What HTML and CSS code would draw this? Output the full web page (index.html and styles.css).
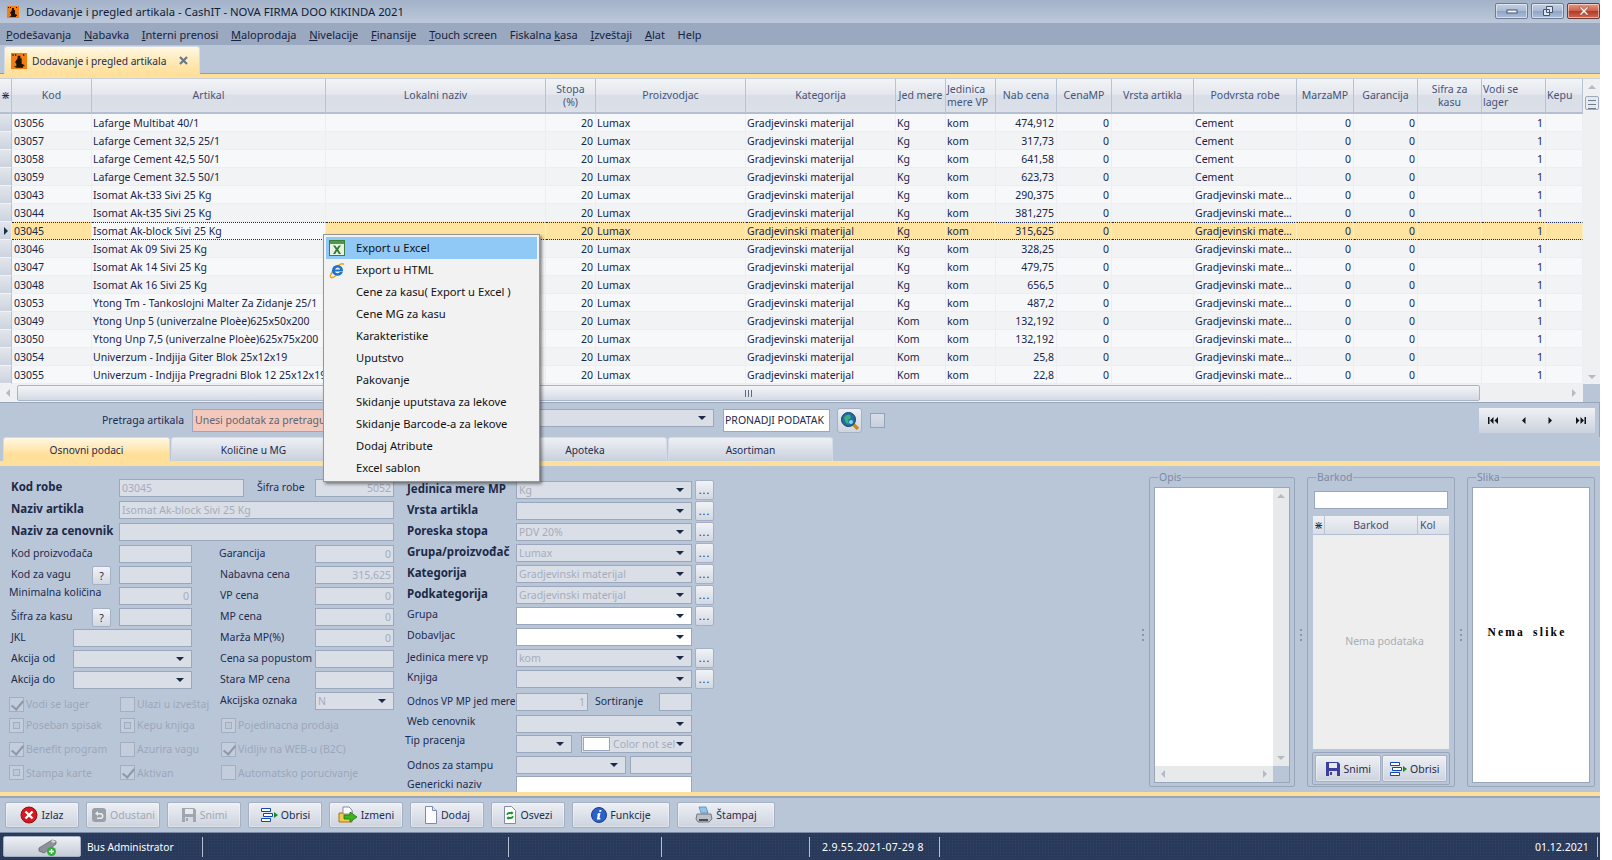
FILE: index.html
```html
<!DOCTYPE html>
<html lang="en">
<head>
    <meta charset="UTF-8">
    <meta name="viewport" content="width=device-width, initial-scale=1.0">
    <title>Dodavanje i pregled artikala - CashIT</title>
    <link rel="stylesheet" href="styles.css">
</head>
<body>
    <svg class="defs" width="0" height="0">
        <symbol id="i-logo" viewBox="0 0 12 12">
            <rect width="12" height="12" fill="#f27d12"/>
            <path d="M1 1h1v1H1zM3 1h1v1H3zM9 1h1v1H9zM5 2h2v2h1v4l2 1v1H9v1H4l-2-1h2V8L3 7l2-3z" fill="#1c1206"/>
        </symbol>
        <symbol id="i-floppy" viewBox="0 0 16 16">
            <path d="M1 1h12l2 2v12H1z" fill="currentColor"/>
            <rect x="4" y="2" width="8" height="5" fill="#e8e8ef"/>
            <rect x="4" y="10" width="8" height="5" fill="#d8d8e0"/>
            <rect x="5" y="11" width="2" height="3" fill="currentColor"/>
        </symbol>
        <symbol id="i-delete" viewBox="0 0 18 16">
            <path d="M1.5 1.5h9v3h-9zM3.5 6.5h9v3h-9zM1.5 11.5h9v3h-9z" fill="#fff" stroke="#1046b0"/>
            <path d="M14 5l4 3-4 3z" fill="#1b8a1b"/>
        </symbol>
    </svg>

    <div class="window">
        <div class="titlebar">
            <svg class="logo"><use href="#i-logo"/></svg>
            <span class="title-text">Dodavanje i pregled artikala - CashIT - NOVA FIRMA DOO KIKINDA 2021</span>
            <div class="win-buttons">
                <div class="win-btn"><svg width="12" height="8"><rect x="1" y="3" width="10" height="3" fill="#f4f6fa" stroke="#44546e"/></svg></div>
                <div class="win-btn"><svg width="12" height="11"><path d="M4.5.5h6v6h-6zM1.5 3.5h6v6h-6z" fill="#dfe6f0" stroke="#44546e"/></svg></div>
                <div class="win-btn close"><svg width="14" height="10"><path d="M2 1h2.5L7 3.5 9.500 1H12L8.500 5 12 9H9.500L7 6.500 4.500 9H2l3.500-4z" fill="#f7f0ee" stroke="#7d3328" stroke-width=".5"/></svg></div>
            </div>
        </div>

        <div class="menubar">
            <span><u>P</u>odešavanja</span>
            <span><u>N</u>abavka</span>
            <span><u>I</u>nterni prenosi</span>
            <span><u>M</u>aloprodaja</span>
            <span><u>N</u>ivelacije</span>
            <span><u>F</u>inansije</span>
            <span><u>T</u>ouch screen</span>
            <span>Fiskalna <u>k</u>asa</span>
            <span><u>I</u>zveštaji</span>
            <span><u>A</u>lat</span>
            <span>Help</span>
        </div>

        <div class="tabstrip">
            <div class="doc-tab">
                <svg class="logo-tab"><use href="#i-logo"/></svg>
                <span>Dodavanje i pregled artikala</span>
                <svg class="tab-close" width="9" height="9"><path d="M1 1l7 7M8 1L1 8" stroke="#6d7684" stroke-width="2.200"/></svg>
            </div>
        </div>
        <div class="gold-line top"></div>

        <div class="grid-wrap">
            <table class="grid">
                <colgroup>
                    <col style="width:12px"><col style="width:80px"><col style="width:234px"><col style="width:220px">
                    <col style="width:50px"><col style="width:150px"><col style="width:150px"><col style="width:50px">
                    <col style="width:50px"><col style="width:61px"><col style="width:55px"><col style="width:82px">
                    <col style="width:103px"><col style="width:57px"><col style="width:64px"><col style="width:64px">
                    <col style="width:64px"><col style="width:37px">
                </colgroup>
                <thead>
                    <tr>
                        <th class="rh">⋇</th><th>Kod</th><th>Artikal</th><th>Lokalni naziv</th><th>Stopa<br>(%)</th>
                        <th>Proizvodjac</th><th>Kategorija</th><th>Jed mere</th><th class="l">Jedinica<br>mere VP</th>
                        <th>Nab cena</th><th>CenaMP</th><th>Vrsta artikla</th><th>Podvrsta robe</th><th>MarzaMP</th>
                        <th>Garancija</th><th>Sifra za<br>kasu</th><th class="l">Vodi se<br>lager</th><th class="l">Kepu</th>
                    </tr>
                </thead>
                <tbody>
                    <tr><td class="rh"></td><td>03056</td><td>Lafarge Multibat 40/1</td><td></td><td class="r">20</td><td>Lumax</td><td>Gradjevinski materijal</td><td>Kg</td><td>kom</td><td class="r">474,912</td><td class="r">0</td><td></td><td>Cement</td><td class="r">0</td><td class="r">0</td><td></td><td class="r">1</td><td></td></tr>
                    <tr><td class="rh"></td><td>03057</td><td>Lafarge Cement 32,5 25/1</td><td></td><td class="r">20</td><td>Lumax</td><td>Gradjevinski materijal</td><td>Kg</td><td>kom</td><td class="r">317,73</td><td class="r">0</td><td></td><td>Cement</td><td class="r">0</td><td class="r">0</td><td></td><td class="r">1</td><td></td></tr>
                    <tr><td class="rh"></td><td>03058</td><td>Lafarge Cement 42,5 50/1</td><td></td><td class="r">20</td><td>Lumax</td><td>Gradjevinski materijal</td><td>Kg</td><td>kom</td><td class="r">641,58</td><td class="r">0</td><td></td><td>Cement</td><td class="r">0</td><td class="r">0</td><td></td><td class="r">1</td><td></td></tr>
                    <tr><td class="rh"></td><td>03059</td><td>Lafarge Cement 32.5 50/1</td><td></td><td class="r">20</td><td>Lumax</td><td>Gradjevinski materijal</td><td>Kg</td><td>kom</td><td class="r">623,73</td><td class="r">0</td><td></td><td>Cement</td><td class="r">0</td><td class="r">0</td><td></td><td class="r">1</td><td></td></tr>
                    <tr><td class="rh"></td><td>03043</td><td>Isomat Ak-t33 Sivi 25 Kg</td><td></td><td class="r">20</td><td>Lumax</td><td>Gradjevinski materijal</td><td>Kg</td><td>kom</td><td class="r">290,375</td><td class="r">0</td><td></td><td>Gradjevinski mate…</td><td class="r">0</td><td class="r">0</td><td></td><td class="r">1</td><td></td></tr>
                    <tr><td class="rh"></td><td>03044</td><td>Isomat Ak-t35 Sivi 25 Kg</td><td></td><td class="r">20</td><td>Lumax</td><td>Gradjevinski materijal</td><td>Kg</td><td>kom</td><td class="r">381,275</td><td class="r">0</td><td></td><td>Gradjevinski mate…</td><td class="r">0</td><td class="r">0</td><td></td><td class="r">1</td><td></td></tr>
                    <tr class="selected"><td class="rh"><span class="row-mark"></span></td><td>03045</td><td class="focus">Isomat Ak-block Sivi 25 Kg</td><td></td><td class="r">20</td><td>Lumax</td><td>Gradjevinski materijal</td><td>Kg</td><td>kom</td><td class="r">315,625</td><td class="r">0</td><td></td><td>Gradjevinski mate…</td><td class="r">0</td><td class="r">0</td><td></td><td class="r">1</td><td></td></tr>
                    <tr><td class="rh"></td><td>03046</td><td>Isomat Ak 09 Sivi 25 Kg</td><td></td><td class="r">20</td><td>Lumax</td><td>Gradjevinski materijal</td><td>Kg</td><td>kom</td><td class="r">328,25</td><td class="r">0</td><td></td><td>Gradjevinski mate…</td><td class="r">0</td><td class="r">0</td><td></td><td class="r">1</td><td></td></tr>
                    <tr><td class="rh"></td><td>03047</td><td>Isomat Ak 14 Sivi 25 Kg</td><td></td><td class="r">20</td><td>Lumax</td><td>Gradjevinski materijal</td><td>Kg</td><td>kom</td><td class="r">479,75</td><td class="r">0</td><td></td><td>Gradjevinski mate…</td><td class="r">0</td><td class="r">0</td><td></td><td class="r">1</td><td></td></tr>
                    <tr><td class="rh"></td><td>03048</td><td>Isomat Ak 16 Sivi 25 Kg</td><td></td><td class="r">20</td><td>Lumax</td><td>Gradjevinski materijal</td><td>Kg</td><td>kom</td><td class="r">656,5</td><td class="r">0</td><td></td><td>Gradjevinski mate…</td><td class="r">0</td><td class="r">0</td><td></td><td class="r">1</td><td></td></tr>
                    <tr><td class="rh"></td><td>03053</td><td>Ytong Tm - Tankoslojni Malter Za Zidanje 25/1</td><td></td><td class="r">20</td><td>Lumax</td><td>Gradjevinski materijal</td><td>Kg</td><td>kom</td><td class="r">487,2</td><td class="r">0</td><td></td><td>Gradjevinski mate…</td><td class="r">0</td><td class="r">0</td><td></td><td class="r">1</td><td></td></tr>
                    <tr><td class="rh"></td><td>03049</td><td>Ytong Unp 5 (univerzalne Ploèe)625x50x200</td><td></td><td class="r">20</td><td>Lumax</td><td>Gradjevinski materijal</td><td>Kom</td><td>kom</td><td class="r">132,192</td><td class="r">0</td><td></td><td>Gradjevinski mate…</td><td class="r">0</td><td class="r">0</td><td></td><td class="r">1</td><td></td></tr>
                    <tr><td class="rh"></td><td>03050</td><td>Ytong Unp 7,5 (univerzalne Ploèe)625x75x200</td><td></td><td class="r">20</td><td>Lumax</td><td>Gradjevinski materijal</td><td>Kom</td><td>kom</td><td class="r">132,192</td><td class="r">0</td><td></td><td>Gradjevinski mate…</td><td class="r">0</td><td class="r">0</td><td></td><td class="r">1</td><td></td></tr>
                    <tr><td class="rh"></td><td>03054</td><td>Univerzum - Indjija Giter Blok 25x12x19</td><td></td><td class="r">20</td><td>Lumax</td><td>Gradjevinski materijal</td><td>Kom</td><td>kom</td><td class="r">25,8</td><td class="r">0</td><td></td><td>Gradjevinski mate…</td><td class="r">0</td><td class="r">0</td><td></td><td class="r">1</td><td></td></tr>
                    <tr><td class="rh"></td><td>03055</td><td>Univerzum - Indjija Pregradni Blok 12 25x12x19</td><td></td><td class="r">20</td><td>Lumax</td><td>Gradjevinski materijal</td><td>Kom</td><td>kom</td><td class="r">22,8</td><td class="r">0</td><td></td><td>Gradjevinski mate…</td><td class="r">0</td><td class="r">0</td><td></td><td class="r">1</td><td></td></tr>
                </tbody>
            </table>
            <div class="vscroll">
                <span class="arrow up"></span>
                <div class="vthumb"></div>
                <span class="arrow down"></span>
            </div>
        </div>
        <div class="hscroll">
            <span class="arrow left"></span>
            <div class="hthumb"><i></i></div>
            <span class="arrow right"></span>
            <div class="corner"></div>
        </div>

        <div class="searchbar">
            <span class="search-label">Pretraga artikala</span>
            <div class="search-input">Unesi podatak za pretragu</div>
            <div class="field combo search-combo"></div>
            <div class="find-box">PRONADJI PODATAK</div>
            <div class="find-btn">
                <svg width="20" height="20" viewBox="0 0 20 20">
                    <path d="M12 12l6 6" stroke="#c98a1c" stroke-width="3.500"/>
                    <circle cx="8.500" cy="8.500" r="7" fill="#1c6fa8" stroke="#153b5f"/>
                    <path d="M4 7q2-4 6-3l1 3-3 2 1 4-3-1z" fill="#3fae7a"/>
                    <circle cx="11" cy="11" r="2" fill="#8fd0ee"/>
                </svg>
            </div>
            <div class="small-check"></div>
            <div class="nav-box">
                <svg width="10" height="9"><path d="M0 1h1.500v7H0zM5.500 1v7L2 4.500zM10 1v7L6.500 4.500z"/></svg>
                <svg width="5" height="9"><path d="M4.500 1v7L1 4.500z"/></svg>
                <svg width="5" height="9"><path d="M.5 1v7L4 4.500z"/></svg>
                <svg width="10" height="9"><path d="M8.500 1H10v7H8.500zM0 1v7l3.500-3.500zM4.500 1v7L8 4.500z"/></svg>
            </div>
        </div>

        <div class="tabs">
            <div class="tab active">Osnovni podaci</div>
            <div class="tab">Količine u MG</div>
            <div class="tab"></div>
            <div class="tab">Apoteka</div>
            <div class="tab">Asortiman</div>
        </div>
        <div class="gold-line"></div>

        <div class="detail">
            <div class="form-left">
                <div class="lbl b span-3">Kod robe</div>
                <div class="code-row">
                    <div class="field off code">03045</div>
                    <div class="lbl code-label">Šifra robe</div>
                    <div class="field off num price">5052</div>
                </div>
                <div class="lbl b span-3">Naziv artikla</div>
                <div class="field off span-wide">Isomat Ak-block Sivi 25 Kg</div>
                <div class="lbl b span-3">Naziv za cenovnik</div>
                <div class="field span-wide"></div>

                <div class="lbl span-3">Kod proizvođača</div>
                <div class="field c4"></div>
                <div class="lbl c6 garancija">Garancija</div>
                <div class="field off num c7">0</div>

                <div class="lbl span-2">Kod za vagu</div>
                <div class="help-btn">?</div>
                <div class="field c4"></div>
                <div class="lbl c6">Nabavna cena</div>
                <div class="field off num c7">315,625</div>

                <div class="lbl span-3 minimal">Minimalna količina</div>
                <div class="field off num c4">0</div>
                <div class="lbl c6">VP cena</div>
                <div class="field off num c7">0</div>

                <div class="lbl span-2">Šifra za kasu</div>
                <div class="help-btn">?</div>
                <div class="field c4"></div>
                <div class="lbl c6">MP cena</div>
                <div class="field off num c7">0</div>

                <div class="lbl c1">JKL</div>
                <div class="field c2-4"></div>
                <div class="lbl c6">Marža MP(%)</div>
                <div class="field off num c7">0</div>

                <div class="lbl c1">Akcija od</div>
                <div class="field combo c2-4"></div>
                <div class="lbl c6">Cena sa popustom</div>
                <div class="field c7"></div>

                <div class="lbl c1">Akcija do</div>
                <div class="field combo c2-4"></div>
                <div class="lbl c6">Stara MP cena</div>
                <div class="field c7"></div>

                <label class="chk first span-3"><span class="box on"></span>Vodi se lager</label>
                <label class="chk first c4-5"><span class="box"></span>Ulazi u izveštaj</label>
                <div class="lbl c6">Akcijska oznaka</div>
                <div class="field off combo c7">N</div>

                <label class="chk span-3"><span class="box mid"></span>Poseban spisak</label>
                <label class="chk c4-5"><span class="box mid"></span>Kepu knjiga</label>
                <label class="chk c6-7"><span class="box mid"></span>Pojedinacna prodaja</label>

                <label class="chk span-3"><span class="box on"></span>Benefit program</label>
                <label class="chk c4-5"><span class="box"></span>Azurira vagu</label>
                <label class="chk c6-7"><span class="box on"></span>Vidljiv na WEB-u (B2C)</label>

                <label class="chk span-3"><span class="box mid"></span>Stampa karte</label>
                <label class="chk c4-5"><span class="box on"></span>Aktivan</label>
                <label class="chk c6-7"><span class="box"></span>Automatsko porucivanje</label>
            </div>

            <div class="form-mid">
                <div class="lbl b">Jedinica mere MP</div><div class="field off combo">Kg</div><div class="dots">...</div>
                <div class="lbl b">Vrsta artikla</div><div class="field combo"></div><div class="dots">...</div>
                <div class="lbl b">Poreska stopa</div><div class="field off combo">PDV 20%</div><div class="dots">...</div>
                <div class="lbl b">Grupa/proizvođač</div><div class="field off combo">Lumax</div><div class="dots">...</div>
                <div class="lbl b">Kategorija</div><div class="field off combo">Gradjevinski materijal</div><div class="dots">...</div>
                <div class="lbl b">Podkategorija</div><div class="field off combo">Gradjevinski materijal</div><div class="dots">...</div>
                <div class="lbl up1">Grupa</div><div class="field white combo"></div><div class="dots">...</div>
                <div class="lbl up1">Dobavljac</div><div class="field white combo"></div><div></div>
                <div class="lbl">Jedinica mere vp</div><div class="field off combo">kom</div><div class="dots">...</div>
                <div class="lbl up1">Knjiga</div><div class="field combo"></div><div class="dots">...</div>
                <div class="lbl ratio-label">Odnos VP MP jed mere</div>
                <div class="pair">
                    <div class="field off num ratio">1</div>
                    <span class="lbl sort-label">Sortiranje</span>
                    <div class="field sort-input"></div>
                </div>
                <div></div>
                <div class="lbl web">Web cenovnik</div><div class="field combo"></div><div></div>
                <div class="lbl tip">Tip pracenja</div>
                <div class="pair">
                    <div class="field combo tip-combo"></div>
                    <div class="field off combo color-combo"><span class="swatch"></span>Color not sel</div>
                </div>
                <div></div>
                <div class="lbl stampa">Odnos za stampu</div>
                <div class="pair">
                    <div class="field combo stampa-combo"></div>
                    <div class="field stampa-input"></div>
                </div>
                <div></div>
                <div class="lbl generic">Genericki naziv</div><div class="field white"></div><div></div>
            </div>

            <div class="grow"></div>

            <div class="grip"><i></i></div>
            <div class="group opis">
                <span class="group-title">Opis</span>
                <div class="memo">
                    <div class="memo-v"><span class="arrow up"></span><span class="arrow down"></span></div>
                    <div class="memo-h"><span class="arrow left"></span><span class="arrow right"></span></div>
                    <div class="memo-corner"></div>
                </div>
            </div>
            <div class="grip"><i></i></div>
            <div class="group barkod">
                <span class="group-title">Barkod</span>
                <div class="field white barkod-input"></div>
                <div class="mini-grid">
                    <div class="mini-head">
                        <span class="m-star">⋇</span><span class="m-code">Barkod</span><span class="m-kol">Kol</span>
                    </div>
                    <div class="mini-body">Nema podataka</div>
                </div>
                <div class="mini-actions">
                    <div class="btn"><svg class="floppy" width="16" height="16"><use href="#i-floppy"/></svg>Snimi</div>
                    <div class="btn"><svg width="18" height="16"><use href="#i-delete"/></svg>Obrisi</div>
                </div>
            </div>
            <div class="grip"><i></i></div>
            <div class="group slika">
                <span class="group-title">Slika</span>
                <div class="picture">Nema slike</div>
            </div>
        </div>

        <div class="gold-line bottom"></div>

        <div class="actions">
            <div class="btn">
                <svg width="18" height="18" viewBox="0 0 18 18"><circle cx="9" cy="9" r="8" fill="#d8161e" stroke="#8c1015"/><path d="M5.500 5.500l7 7M12.500 5.500l-7 7" stroke="#fff" stroke-width="2.400"/></svg>
                Izlaz
            </div>
            <div class="btn off">
                <svg width="16" height="16" viewBox="0 0 16 16"><rect x="1" y="1" width="14" height="14" rx="3" fill="#9aa0a8"/><path d="M7 4L4 6.500 7 9V7.500h2q2 0 2 1.500t-2 1.500H6V12h3.500q3 0 3-3t-3-3H7z" fill="#e9ebee"/></svg>
                Odustani
            </div>
            <div class="btn off">
                <svg class="floppy grey" width="16" height="16"><use href="#i-floppy"/></svg>
                Snimi
            </div>
            <div class="btn">
                <svg width="18" height="16"><use href="#i-delete"/></svg>
                Obrisi
            </div>
            <div class="btn">
                <svg width="20" height="18" viewBox="0 0 20 18"><path d="M1 7h4l1-2h8v11H1z" fill="#f3c94b" stroke="#a5761a"/><path d="M5 1h6l3 3v4H5z" fill="#fff" stroke="#7e8ca8"/><path d="M6 9h6V6l7 5-7 5v-3H6z" fill="#3cb521" stroke="#1f7a12" stroke-width=".8"/></svg>
                Izmeni
            </div>
            <div class="btn">
                <svg width="14" height="18" viewBox="0 0 14 18"><path d="M1.500.5h7l4 4v13h-11z" fill="#fdfdff" stroke="#7e8ca8"/><path d="M8.500.5v4h4" fill="#dfe6f4" stroke="#7e8ca8"/></svg>
                Dodaj
            </div>
            <div class="btn">
                <svg width="14" height="18" viewBox="0 0 14 18"><path d="M1.500.5h7l4 4v13h-11z" fill="#fdfdff" stroke="#7e8ca8"/><path d="M3.500 9q0-3 3-3h2V5l2 2-2 2V8h-2q-1.500 0-1.500 1zM10.500 10q0 3-3 3h-2v1l-2-2 2-2v1h2q1.500 0 1.500-1z" fill="#1e9a2a"/></svg>
                Osvezi
            </div>
            <div class="btn wide">
                <svg width="16" height="16" viewBox="0 0 16 16"><circle cx="8" cy="8" r="7.500" fill="#2a62c8" stroke="#1a3f8a"/><path d="M8.500 3h2l-.4 1.800h-2zM7.500 6h2l-1 5h1l-.3 1.500H5.800l1-5h-1z" fill="#fff"/></svg>
                Funkcije
            </div>
            <div class="btn wide">
                <svg width="18" height="18" viewBox="0 0 18 18"><path d="M4 1h7l2 6H6z" fill="#8fc6ef" stroke="#4f7ea8" stroke-width=".7"/><path d="M2 8h14l1 5-3 3H3l-2-3z" fill="#bcc1c8" stroke="#5d636c" stroke-width=".8"/><rect x="4" y="13" width="9" height="2" fill="#4a4f57"/></svg>
                Štampaj
            </div>
        </div>

        <div class="statusbar">
            <div class="status-btn">
                <svg width="24" height="20" viewBox="0 0 24 20"><path d="M3 11l13-8 4 1v3L8 16l-5-2z" fill="#8d9298" stroke="#5a5f66" stroke-width=".7"/><path d="M16 3l4 1-2 2-3-1z" fill="#d5d8dc"/><circle cx="15.500" cy="14.500" r="4.500" fill="#2fae3a"/><path d="M15.500 12v5M13 14.500h5" stroke="#fff" stroke-width="1.500"/></svg>
            </div>
            <span class="user">Bus Administrator</span>
            <span class="sep s1"></span>
            <span class="sep s2"></span>
            <span class="sep s3"></span>
            <span class="sep s4"></span>
            <span class="version">2.9.55.2021-07-29 8</span>
            <span class="sep s5"></span>
            <span class="date">01.12.2021</span>
            <span class="sep s6"></span>
        </div>

        <div class="context-menu">
            <div class="item hover">
                <svg width="16" height="16" viewBox="0 0 16 16"><rect x=".5" y=".5" width="15" height="15" fill="#e7f2e4" stroke="#3c7f3a"/><path d="M1 1h14v3H1z" fill="#4b9a48"/><path d="M4 5.500h2.200L8 8l1.800-2.500H12L9.200 9.500 12 14H9.800L8 11l-1.800 3H4l2.800-4.500z" fill="#2f7a30"/></svg>
                Export u Excel
            </div>
            <div class="item">
                <svg width="17" height="17" viewBox="0 0 17 17"><path d="M15 2.500C13 .5 8 3.500 4.500 8 2 11.500.5 14.500 2 15.500c1 .7 3-.2 5-2" fill="none" stroke="#e8a61c" stroke-width="1.500"/><path d="M8.500 3a5.500 5.500 0 0 0-5.500 5.500A5.500 5.500 0 0 0 13.700 10h-2.900a2.800 2.800 0 0 1-4.900-.4H14V8.500A5.500 5.500 0 0 0 8.500 3zM6 7.500a2.700 2.700 0 0 1 5.200 0z" fill="#1d74c9"/></svg>
                Export u HTML
            </div>
            <div class="item">Cene za kasu( Export u Excel )</div>
            <div class="item">Cene MG za kasu</div>
            <div class="item">Karakteristike</div>
            <div class="item">Uputstvo</div>
            <div class="item">Pakovanje</div>
            <div class="item">Skidanje uputstava za lekove</div>
            <div class="item">Skidanje Barcode-a za lekove</div>
            <div class="item">Dodaj Atribute</div>
            <div class="item">Excel sablon</div>
        </div>
    </div>
</body>
</html>
```

FILE: styles.css
```css
* {
    box-sizing: border-box;
}
body {
    margin: 0;
    background: #fff;
    font-family: "Noto Sans", "Open Sans", sans-serif;
    font-size: 10.5px;
    color: #1d2c50;
    overflow: hidden;
}
.defs {
    position: absolute;
}
.window {
    position: relative;
    width: 1600px;
    height: 860px;
    display: flex;
    flex-direction: column;
    background: #b9c6d8;
    overflow: hidden;
}

/* title + menu */
.titlebar {
    height: 23px;
    display: flex;
    align-items: center;
    padding-left: 7px;
    background: linear-gradient(#a3b2c9, #bcc8da);
    color: #0f1d38;
    font-size: 11.3px;
}
.logo {
    width: 12px;
    height: 12px;
    margin-right: 7px;
}
.title-text {
    flex: 1;
}
.win-buttons {
    display: flex;
    gap: 3px;
    align-self: flex-start;
    margin-top: 3px;
}
.win-btn {
    width: 33px;
    height: 16px;
    display: flex;
    align-items: center;
    justify-content: center;
    border: 1px solid #6d7c94;
    border-radius: 2px;
    box-shadow: inset 0 0 0 1px rgba(255,255,255,0.5);
    background: linear-gradient(#c3d0e2 0%, #a9bbd4 48%, #8ea5c6 52%, #aebfd8 100%);
}
.win-btn.close {
    border-color: #6e3a34;
    background: linear-gradient(#e59a86 0%, #d0604a 48%, #b23a26 52%, #cf6a50 100%);
}
.menubar {
    height: 22px;
    display: flex;
    align-items: center;
    gap: 12.700px;
    padding-left: 6px;
    background: #9aa8c0;
    color: #15233f;
    font-size: 11px;
}
.tabstrip {
    height: 29px;
    padding: 1px 0 0 4px;
    background: #b9c6d8;
    border-bottom: 1px solid #8f9cb2;
}
.doc-tab {
    width: 196px;
    height: 28px;
    display: flex;
    align-items: center;
    padding-left: 6px;
    white-space: nowrap;
    font-size: 10.200px;
    border: 1px solid #d4dbe6;
    border-bottom: 0;
    border-radius: 3px 3px 0 0;
    background: linear-gradient(#fff8e4, #ffe6ab 70%, #ffe09a);
    color: #1d2c50;
}
.logo-tab {
    width: 16px;
    height: 16px;
    margin-right: 5px;
}
.tab-close {
    margin-left: auto;
    margin-right: 11px;
}
.gold-line {
    height: 5px;
    background: #ffe09a;
}
.gold-line.top {
    height: 5px;
    border-bottom: 1px solid #c9d0dc;
}
.gold-line.bottom {
    height: 6px;
    border-bottom: 2px solid #97a4b9;
}

/* main grid */
.grid-wrap {
    height: 305px;
    display: flex;
    background: #f4f5f7;
}
.grid {
    width: 1583px;
    table-layout: fixed;
    border-collapse: separate;
    border-spacing: 0;
}
.grid th {
    height: 35px;
    padding: 0 1px;
    font-weight: 400;
    line-height: 13px;
    white-space: nowrap;
    color: #45557c;
    border-right: 1px solid #b8c3d4;
    border-bottom: 2px solid #b4bfd1;
    background: linear-gradient(#f2f4f7 0%, #e4e7ed 46%, #d9dee7 50%, #dce0e8 100%);
}
.grid th.l {
    text-align: left;
}
.grid td {
    height: 18px;
    padding: 0 2px 0 1px;
    line-height: 16px;
    white-space: nowrap;
    overflow: hidden;
    color: #17264a;
    border-right: 1px solid #eceef2;
    border-bottom: 1px solid #eceef2;
    background: #f7f8fa;
}
.grid td:nth-child(2) {
    padding-left: 2px;
}
.grid tr:nth-child(even) td {
    background: #f2f3f5;
}
.grid td.r {
    text-align: right;
}
.grid .rh {
    padding: 0;
    color: #1d2c50;
    text-align: center;
    border-right: 1px solid #b8c3d4;
}
.grid td.rh,
.grid tr:nth-child(even) td.rh {
    background: linear-gradient(#e2e6ec, #cdd4df);
    border-bottom: 1px solid #f2f3f5;
}
.grid tr.selected td {
    background: #ffe3a0;
    border-top: 1px dotted #1d2c50;
    border-bottom: 1px dotted #1d2c50;
    border-right-color: #ffeec4;
    line-height: 14px;
}
.grid tr.selected td.focus {
    background: #f7f8fa;
}
.grid tr.selected td.rh {
    background: linear-gradient(#e2e6ec, #cdd4df);
    border-top: 0;
    border-bottom: 1px solid #f2f3f5;
}
.row-mark {
    display: inline-block;
    width: 0;
    height: 0;
    border-left: 4px solid #1d2c50;
    border-top: 4px solid transparent;
    border-bottom: 4px solid transparent;
}
.arrow {
    display: block;
    width: 0;
    height: 0;
    flex: none;
}
.arrow.up {
    border: 4px solid transparent;
    border-top: 0;
    border-bottom: 4px solid #b4bac4;
}
.arrow.down {
    border: 4px solid transparent;
    border-bottom: 0;
    border-top: 4px solid #b4bac4;
}
.arrow.left {
    border: 4px solid transparent;
    border-left: 0;
    border-right: 4px solid #b4bac4;
}
.arrow.right {
    border: 4px solid transparent;
    border-right: 0;
    border-left: 4px solid #b4bac4;
}
.vscroll {
    width: 17px;
    display: flex;
    flex-direction: column;
    align-items: center;
    padding: 6px 0 5px;
    background: #eef0f2;
}
.vthumb {
    width: 14px;
    height: 14px;
    margin-top: 7px;
    flex: 1 1 0;
    max-height: 14px;
    margin-bottom: auto;
    border: 1px solid #9eaabc;
    border-radius: 2px;
    background: repeating-linear-gradient(#e4e8ee 0 3px, #6f7b8f 3px 4px);
    background-size: 8px 12px;
    background-position: center;
    background-repeat: no-repeat;
    background-color: #e8ebf0;
}
.hscroll {
    height: 18px;
    display: flex;
    align-items: center;
    padding-left: 6px;
    background: #eef0f2;
}
.hthumb {
    width: 1463px;
    height: 16px;
    margin-left: 7px;
    display: flex;
    align-items: center;
    justify-content: center;
    border: 1px solid #a9b4c5;
    border-radius: 2px;
    background: linear-gradient(#f3f5f8, #d5dae3);
}
.hthumb i {
    width: 7px;
    height: 7px;
    background: repeating-linear-gradient(90deg, #5d6a80 0 1px, transparent 1px 3px);
}
.hscroll .arrow.right {
    margin-left: 92px;
}
.corner {
    width: 17px;
    height: 18px;
    margin-left: auto;
    background: #b9c6d8;
}

/* search row */
.searchbar {
    height: 35px;
    display: flex;
    align-items: flex-start;
    padding: 6px 4px 0 102px;
    border-top: 1px solid #97a4b9;
    border-right: 1px solid #97a4b9;
}
.search-label {
    width: 90px;
    line-height: 22px;
    color: #1d2c50;
}
.search-input {
    width: 160px;
    height: 23px;
    padding-left: 2px;
    line-height: 20px;
    white-space: nowrap;
    color: #5f6672;
    background: #f3c9bd;
    border: 1px solid #9aa7bd;
}
.search-combo {
    width: 359px;
    height: 23px;
    margin-left: 3px;
    background: #fff;
}
.find-box {
    width: 107px;
    height: 23px;
    margin-left: 9px;
    padding-left: 1px;
    line-height: 21px;
    white-space: nowrap;
    background: #fff;
    border: 1px solid #9aa7bd;
}
.find-btn {
    width: 25px;
    height: 25px;
    margin: -1px 0 0 7px;
    display: flex;
    align-items: center;
    justify-content: center;
    border: 1px solid #a5b0c4;
    border-radius: 3px;
    background: linear-gradient(#edf0f4, #cfd5e0);
}
.small-check {
    width: 15px;
    height: 15px;
    margin: 4px 0 0 8px;
    border: 1px solid #94a1b7;
    background: linear-gradient(#d9dee6, #c9d0db);
}
.nav-box {
    width: 116px;
    height: 25px;
    margin: -1px 0 0 auto;
    display: flex;
    align-items: center;
    justify-content: space-between;
    padding: 0 9px;
    background: linear-gradient(#eff1f5, #cbd2dd);
}
.nav-box svg {
    fill: #10131a;
}

/* lower tabs */
.tabs {
    height: 24px;
    display: flex;
    gap: 1px;
    padding-left: 3px;
    font-size: 10.200px;
}
.tab {
    width: 165px;
    height: 24px;
    display: flex;
    align-items: center;
    justify-content: center;
    border: 1px solid #d4dbe6;
    border-bottom: 0;
    border-radius: 3px 3px 0 0;
    background: linear-gradient(#eef0f4, #c9d0dc);
}
.tab:nth-child(4) {
    width: 164px;
}
.tab.active {
    width: 167px;
    background: linear-gradient(#fff8e4, #ffe09a 70%);
}

/* form */
.detail {
    height: 326px;
    display: flex;
    padding: 13px 5px 0 9px;
    overflow: hidden;
}
.lbl {
    line-height: 17px;
    white-space: nowrap;
    padding-left: 2px;
    color: #1d2c50;
}
.lbl.b {
    font-size: 11.5px;
    line-height: 16px;
    font-weight: 700;
    color: #1c2a48;
}
.field {
    position: relative;
    height: 18px;
    padding: 0 2px;
    line-height: 16px;
    white-space: nowrap;
    overflow: hidden;
    background: #d9dee7;
    border: 1px solid #9aa7bd;
}
.field.off {
    color: #a6adba;
}
.field.num {
    text-align: right;
}
.field.white {
    background: #fff;
}
.combo::after {
    content: '';
    position: absolute;
    top: 6px;
    right: 7px;
    border-left: 4px solid transparent;
    border-right: 4px solid transparent;
    border-top: 4px solid #1c2a48;
}
.form-left {
    width: 385px;
    flex: none;
    display: grid;
    grid-template-columns: 64px 19px 27px 73px 27px 96px 79px;
    grid-template-rows: 22px 22px 22px repeat(7, 21px) 21px 24px 24px 23px 24px;
    grid-auto-rows: 21px;
}
.span-2 { grid-column: 1 / 3; }
.span-3 { grid-column: 1 / 4; }
.span-wide { grid-column: 4 / 8; }
.c1 { grid-column: 1; }
.c2-4 { grid-column: 2 / 5; }
.c4 { grid-column: 4; }
.c4-5 { grid-column: 4 / 6; }
.c6 { grid-column: 6; padding-left: 1px; }
.c6-7 { grid-column: 6 / 8; }
.c7 { grid-column: 7; }
.garancija { padding-left: 0; }
.minimal { padding-left: 0; margin-top: -3px; }
.code-row {
    grid-column: 4 / 8;
    display: flex;
    align-items: flex-start;
}
.code { width: 125px; }
.code-label { width: 58px; margin-left: 12px; padding-left: 1px; }
.price { width: 79px; margin-left: auto; }
.help-btn {
    width: 19px;
    height: 19px;
    line-height: 18px;
    text-align: center;
    border: 1px solid #a5b0c4;
    border-radius: 2px;
    background: linear-gradient(#f1f3f6, #d2d8e2);
}
.chk {
    display: flex;
    align-items: center;
    gap: 2px;
    white-space: nowrap;
    color: #9ca7b9;
    margin-left: 1px;
}
.chk.span-3 { margin-left: 0; }
.chk.c6-7 { margin-left: 2px; }
.chk.first {
    align-self: end;
    height: 24px;
    margin-bottom: -3px;
}
.box {
    position: relative;
    width: 15px;
    height: 15px;
    flex: none;
    border: 1px solid #a3aec1;
    background: #c3cddc;
}
.box.mid::after {
    content: '';
    position: absolute;
    inset: 3px;
    border: 1px solid #a3aec1;
    background: #bcc7d8;
}
.box.on::after {
    content: '';
    position: absolute;
    left: 4px;
    top: 0;
    width: 5px;
    height: 10px;
    border-right: 2px solid #8d97a8;
    border-bottom: 2px solid #8d97a8;
    transform: rotate(40deg);
}
.form-mid {
    width: 307px;
    flex: none;
    margin: 2px 0 0 13px;
    display: grid;
    grid-template-columns: 109px 176px 22px;
    grid-template-rows: repeat(9, 21px) 23px 22px 20px 21px 20px 18px;
    align-content: start;
}
.form-mid .lbl {
    padding-left: 0;
}
.up1 { margin-top: -1px; }
.web { margin-top: -2px; }
.ratio-label { font-size: 10.100px; }
.dots {
    width: 19px;
    height: 20px;
    margin: -1px 0 0 3px;
    line-height: 19px;
    text-align: center;
    letter-spacing: 1px;
    border: 1px solid #a5b0c4;
    border-radius: 2px;
    background: linear-gradient(#f1f3f6, #d2d8e2);
}
.pair {
    display: flex;
    align-items: flex-start;
}
.ratio { width: 72px; }
.form-mid .sort-label { margin-left: 7px; }
.sort-input { width: 33px; margin-left: auto; }
.tip { margin-left: -2px; margin-top: -3px; }
.stampa { margin-top: 1px; }
.tip-combo { width: 56px; }
.color-combo {
    width: 111px;
    margin-left: 9px;
    display: flex;
    align-items: center;
    padding-left: 1px;
}
.swatch {
    width: 27px;
    height: 14px;
    margin-right: 3px;
    flex: none;
    background: #fff;
    border: 1px solid #9aa7bd;
}
.stampa-combo { width: 110px; }
.stampa-input { width: 62px; margin-left: 4px; }
.grow {
    flex: 1;
}

/* right side groups */
.grip {
    width: 12px;
    flex: none;
    display: flex;
    align-items: center;
    justify-content: center;
    height: 310px;
    margin-top: -2px;
    padding-top: 8px;
}
.grip i {
    width: 2px;
    height: 14px;
    background: repeating-linear-gradient(#8795ad 0 2px, transparent 2px 5px);
}
.group {
    position: relative;
    height: 310px;
    margin-top: -2px;
    flex: none;
    border: 1px solid #98a5bb;
    border-radius: 2px;
}
.group-title {
    position: absolute;
    top: -7px;
    left: 8px;
    padding: 0 1px;
    line-height: 13px;
    color: #7c8aa5;
    background: #b9c6d8;
}
.opis {
    width: 146px;
    padding: 9px 4px 3px;
}
.memo {
    position: relative;
    height: 100%;
    background: #fff;
    border: 1px solid #98a5bb;
}
.memo-v {
    position: absolute;
    top: 0;
    right: 0;
    bottom: 16px;
    width: 16px;
    display: flex;
    flex-direction: column;
    align-items: center;
    justify-content: space-between;
    padding: 6px 0;
    background: #e8e9eb;
}
.memo-h {
    position: absolute;
    left: 0;
    right: 16px;
    bottom: 0;
    height: 16px;
    display: flex;
    align-items: center;
    justify-content: space-between;
    padding: 0 6px;
    background: #e8e9eb;
}
.memo-corner {
    position: absolute;
    right: 0;
    bottom: 0;
    width: 16px;
    height: 16px;
    background: #b9c6d8;
}
.barkod {
    width: 148px;
    display: flex;
    flex-direction: column;
    padding: 13px 5px 1px;
}
.barkod-input {
    flex: none;
    width: 134px;
    margin-left: 1px;
}
.mini-grid {
    flex: 1;
    margin-top: 7px;
    display: flex;
    flex-direction: column;
}
.mini-head {
    height: 19px;
    display: flex;
    text-align: center;
    line-height: 19px;
    color: #3f4f78;
    border-bottom: 1px solid #b4bfd1;
    background: linear-gradient(#eef0f4, #d9dee7);
}
.m-star { width: 11px; color: #1d2c50; }
.m-code { width: 94px; border-left: 1px solid #b8c3d4; border-right: 1px solid #b8c3d4; }
.m-kol { padding-left: 2px; }
.mini-body {
    flex: 1;
    display: flex;
    align-items: center;
    justify-content: center;
    padding: 0 0 2px 7px;
    color: #a8adb5;
    background: #eeeeee;
}
.mini-actions {
    height: 33px;
    flex: none;
    margin: 3px -1px 0;
    display: flex;
    gap: 1px;
    padding: 2px;
    border: 1px solid #98a5bb;
    border-radius: 2px;
}
.mini-actions .btn {
    flex: 1;
    width: auto;
    min-width: 0;
    height: 27px;
}
.floppy {
    color: #3d3f9c;
}
.floppy.grey {
    color: #a0a6ae;
}
.slika {
    width: 128px;
    padding: 9px 4px 3px;
}
.picture {
    height: 100%;
    display: flex;
    align-items: center;
    justify-content: center;
    padding: 0 8px 7px 0;
    font-family: "Liberation Serif", serif;
    font-size: 11.5px;
    font-weight: 700;
    letter-spacing: 2.200px;
    word-spacing: 3px;
    color: #000;
    background: #fff;
    border: 1px solid #98a5bb;
}

/* bottom buttons */
.actions {
    height: 34px;
    display: flex;
    gap: 7px;
    padding: 4px 0 0 5px;
}
.btn {
    width: 74px;
    height: 26px;
    flex: none;
    display: flex;
    align-items: center;
    justify-content: center;
    gap: 3px;
    color: #1d2c50;
    border: 1px solid #a5b0c4;
    border-radius: 2px;
    box-shadow: inset 0 0 0 1px rgba(255,255,255,0.35);
    background: linear-gradient(#edf0f4, #cdd3de);
}
.btn.wide {
    width: 98px;
}
.btn.off {
    color: #a0a8b5;
}

/* status bar */
.statusbar {
    position: relative;
    height: 28px;
    display: flex;
    align-items: center;
    padding-left: 3px;
    color: #fff;
    border-top: 1px solid #7c8aa5;
    background-color: #29395a;
    background-image: radial-gradient(#33456a 35%, transparent 40%);
    background-size: 3px 3px;
}
.status-btn {
    width: 78px;
    height: 21px;
    display: flex;
    align-items: center;
    justify-content: center;
    padding-left: 12px;
    border: 1px solid #a5b0c4;
    border-radius: 2px;
    background: linear-gradient(#eef0f4, #c5ccd8);
}
.user {
    margin-left: 6px;
    font-size: 10.200px;
}
.sep {
    position: absolute;
    top: 4px;
    width: 1px;
    height: 20px;
    background: #b5c0d2;
}
.s1 { left: 202px; }
.s2 { left: 508px; }
.s3 { left: 661px; }
.s4 { left: 809px; }
.s5 { left: 939px; }
.s6 { left: 1597px; }
.version {
    position: absolute;
    left: 822px;
    letter-spacing: .3px;
}
.date {
    position: absolute;
    left: 1535px;
}

/* right click menu */
.context-menu {
    position: absolute;
    left: 323px;
    top: 234px;
    width: 217px;
    height: 248px;
    padding: 2px;
    color: #111;
    font-size: 11.200px;
    background: #f2f2f2;
    border: 1px solid #979797;
    box-shadow: 2px 2px 3px rgba(40,40,40,0.55);
}
.item {
    position: relative;
    height: 22px;
    display: flex;
    align-items: center;
    padding: 0 0 2px 30px;
}
.item.hover {
    background: #90c8f6;
}
.item svg {
    position: absolute;
    left: 3px;
    top: 3px;
}
```
